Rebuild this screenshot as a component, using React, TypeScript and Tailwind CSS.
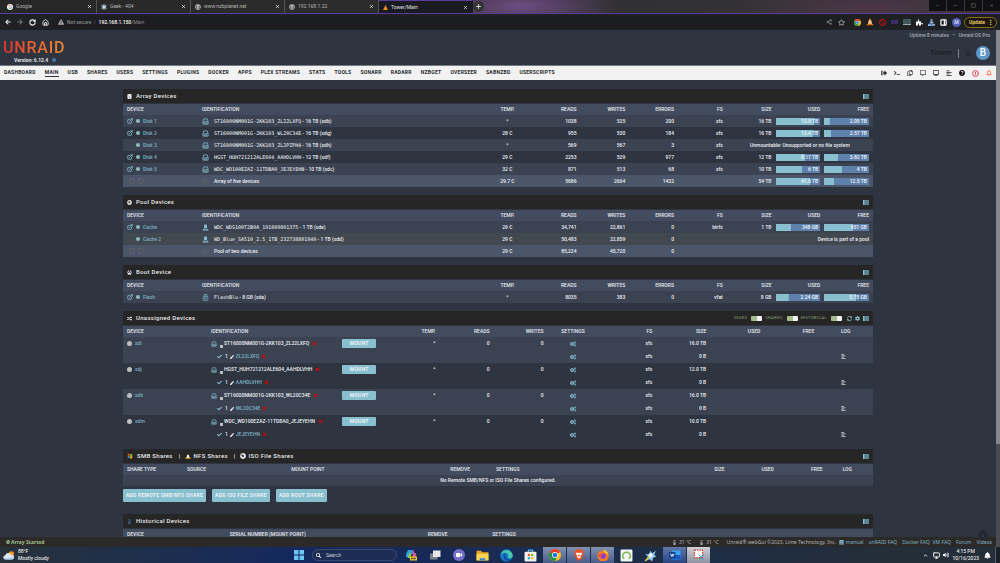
import type { ReactNode } from 'react';
import {
  FaArrowLeft, FaArrowRight, FaRegStar, FaBan, FaPuzzlePiece, FaDownload, FaExclamationTriangle, FaGlobe,
  FaCogs, FaCog, FaCheck, FaPen, FaTimes, FaBook, FaQuestionCircle, FaRegBell, FaBell, FaInfoCircle,
  FaDatabase, FaPaw, FaRandom, FaCompactDisc, FaSearch, FaSyncAlt, FaVolumeUp, FaThermometerHalf,
  FaVideo, FaSignOutAlt, FaTerminal, FaRegCopy, FaRegCommentAlt, FaDesktop, FaAlignLeft, FaStarOfLife,
} from 'react-icons/fa';
import {
  ExternalLink, RotateCw, House, Share2, ChevronDown, ChevronUp, ChevronLeft, Minus, Square, X, Plus,
  EllipsisVertical, Monitor, Menu, HardDrive, PanelRight, CircleAlert,
} from 'lucide-react';

const SANS = "font-['Roboto','Noto_Sans',sans-serif]";
const MONO = "font-['DejaVu_Sans_Mono',monospace]";

/* ---------- small drawings ---------- */

function ChromeLogo({ className }: { className?: string }) {
  return (
    <svg viewBox="0 0 24 24" className={className}>
      <circle cx="12" cy="12" r="12" fill="#fbc116" />
      <path d="M12 12 L1.6 6 A12 12 0 0 1 22.4 6 Z" fill="#e33b2e" />
      <path d="M12 12 L1.6 6 A12 12 0 0 0 12 24 L17 15 Z" fill="#229342" />
      <circle cx="12" cy="12" r="5.8" fill="#fff" />
      <circle cx="12" cy="12" r="4.5" fill="#1a73e8" />
    </svg>
  );
}

function GoogleLogo({ className }: { className?: string }) {
  return (
    <svg viewBox="0 0 24 24" className={className}>
      <circle cx="12" cy="12" r="12" fill="#fff" />
      <g fill="none" strokeWidth="3.4">
        <path d="M17 7.5 A7 7 0 0 0 5.6 9.2" stroke="#ea4335" />
        <path d="M5.6 9.2 A7 7 0 0 0 5.9 15.4" stroke="#fbbc05" />
        <path d="M5.9 15.4 A7 7 0 0 0 16.6 17.2" stroke="#34a853" />
        <path d="M16.6 17.2 A7 7 0 0 0 19 12 H12" stroke="#4285f4" />
      </g>
    </svg>
  );
}

function Cone({ className }: { className?: string }) {
  return (
    <svg viewBox="0 0 24 24" className={className}>
      <path d="M10 2h4l5 17H5z" fill="#f57900" />
      <path d="M8.7 7.5h6.6l1 3.5H7.7zM7 13.5h10l1 3H6z" fill="#f4f4f4" />
      <path d="M3 18h18l1.5 4h-21z" fill="#e06a00" />
    </svg>
  );
}

function DriveIcon({ className }: { className?: string }) {
  return (
    <svg viewBox="0 0 24 24" className={className} fill="none" stroke="#88c0d0" strokeWidth="2.6">
      <path d="M3 13 L6 3 H18 L21 13 V21 H3 Z" />
      <path d="M3 13 H21" />
      <path d="M6 17.5 H18" strokeWidth="3" />
    </svg>
  );
}

function SsdIcon({ className }: { className?: string }) {
  return (
    <svg viewBox="0 0 24 24" className={className} fill="#88c0d0">
      <path d="M7 2h10v12H7z" />
      <path d="M4 16h16l1 2H3zM2 19h20v3H2z" />
    </svg>
  );
}

function FlashIcon({ className }: { className?: string }) {
  return (
    <svg viewBox="0 0 24 24" className={className} fill="none" stroke="#88c0d0" strokeWidth="2.4">
      <path d="M7 8 V2 H17 V8" />
      <rect x="4" y="8" width="16" height="14" rx="4" />
      <path d="M8 13h8M8 17h8" />
    </svg>
  );
}

function ListIcon({ className }: { className?: string }) {
  return (
    <svg viewBox="0 0 24 20" className={className}>
      <rect width="24" height="20" fill="#5f8c97" />
      <path d="M0 0h5v20H0z" fill="#88c0d0" />
      <path d="M7 5h17M7 10h17M7 15h17" stroke="#50727b" strokeWidth="1.5" />
    </svg>
  );
}

function Penguin({ className }: { className?: string }) {
  return (
    <svg viewBox="0 0 24 24" className={className}>
      <path d="M12 1c4 0 4.500 3 4.500 6s4 7 4 11-4 5-8.500 5-8.500-1-8.500-5 4-8 4-11 .5-6 4.500-6z" fill="#1b1b1b" />
      <ellipse cx="12" cy="14" rx="5" ry="8" fill="#f5f5f5" />
      <path d="M9 6.500h6l-3 3zM1 19l7-3 3 7H2zM23 19l-7-3-3 7h9z" fill="#f5b51c" />
    </svg>
  );
}

function WindowsFlag({ className }: { className?: string }) {
  return (
    <svg viewBox="0 0 24 24" className={className}>
      <path d="M3 4q4-3 8-1v8q-4-2-8 1z" fill="#f25022" />
      <path d="M12 4q5 2 9-1v8q-4 3-9 1z" fill="#7fba00" />
      <path d="M3 13q4-3 8-1v8q-4-2-8 1z" fill="#3a8fd9" />
      <path d="M12 13q5 2 9-1v8q-4 3-9 1z" fill="#ffb900" />
    </svg>
  );
}

function WeatherIcon({ className }: { className?: string }) {
  return (
    <svg viewBox="0 0 36 30" className={className}>
      <circle cx="25" cy="10" r="8" fill="#f59a23" />
      <path d="M8 27a6.500 6.500 0 0 1-1-13 9 9 0 0 1 17-1 7 7 0 0 1 4 14z" fill="#dbe7f7" />
      <path d="M8 27a6.500 6.500 0 0 1-6-4q14 3 31-3a7 7 0 0 1-5 7z" fill="#9cbdea" />
    </svg>
  );
}

/* ---------- browser chrome ---------- */

const browserTabs = [
  { title: 'Google', icon: <GoogleLogo className="size-[6px]" /> },
  { title: 'Geek - 404', icon: <FaStarOfLife className="size-[6px] rounded-full text-[#b9dbe4]" /> },
  { title: 'www.nzbplanet.net', icon: <FaGlobe className="size-[6px] text-[#c8c8c8]" /> },
  { title: '192.168.1.22', icon: <FaGlobe className="size-[6px] text-[#c8c8c8]" /> },
  { title: 'Tower/Main', icon: <svg viewBox="0 0 10 10" className="size-[5px]"><path d="M5 0L10 10H0z" fill="#f08a1c" /></svg>, active: true },
];

function TabStrip() {
  return (
    <div className="flex h-[14px] items-stretch justify-between border-b border-[#5b3b9c] bg-[#2b2a2c] bg-[radial-gradient(ellipse_100px_24px_at_520px_6px,#6f4c84,transparent),radial-gradient(ellipse_140px_20px_at_870px_8px,#4c3648,transparent),linear-gradient(90deg,#262626,#2c2c2c_35%,#37353a)]">
      <div className="flex items-stretch pl-[3px]">
        {browserTabs.map((tab) => (
          <div
            key={tab.title}
            className={`flex w-[94px] items-center gap-[3px] border-r pl-1 pr-[4px] ${
              tab.active ? 'border-t border-t-[#5b3b9c] border-r-transparent bg-[#1a1a22] text-[#e4e4e4]' : 'border-r-[#555] text-[#b5b5b5]'
            }`}
          >
            {tab.icon}
            <span className="flex-1 text-[5px] leading-none">{tab.title}</span>
            <button aria-label={`Close ${tab.title}`}><X className="size-[5px] text-white" strokeWidth={3} /></button>
          </div>
        ))}
        <button aria-label="New tab" className="flex size-[11px] items-center justify-center self-center rounded-full bg-[#333336] text-white">
          <Plus className="size-[7px]" strokeWidth={2.5} />
        </button>
      </div>
      <div className="flex h-[11px] gap-px text-[#8a8a8a]">
        {[ChevronDown, Minus, Square, X].map((Icon, i) => (
          <button key={i} aria-label={['Search tabs', 'Minimize', 'Restore', 'Close'][i]} className="flex w-[17px] items-center justify-center bg-[#101012]">
            <Icon className="size-[5px]" strokeWidth={2} />
          </button>
        ))}
      </div>
    </div>
  );
}

function AddressBar() {
  return (
    <div className="flex h-4 items-center bg-[#1f2023] text-[5px] leading-none">
      <div className="flex items-center gap-[6px] pl-[5px] pr-[6px] text-[#ececec]">
        <button aria-label="Back"><FaArrowLeft className="size-[6px]" /></button>
        <button aria-label="Forward"><FaArrowRight className="size-[6px] text-[#777]" /></button>
        <button aria-label="Reload"><RotateCw className="size-[7px]" strokeWidth={3.5} /></button>
        <button aria-label="Home"><House className="size-[7px]" strokeWidth={3} /></button>
      </div>
      <div className="flex h-3 flex-1 items-center rounded-full bg-[#1c1d20] pl-[3px] pr-[3px] text-[#8c8c8c]">
        <FaExclamationTriangle className="mr-[3px] size-[6px] text-[#a8a8a8]" />
        <span className="font-medium">Not secure</span>
        <span className="mx-[3px] text-[#666]">|</span>
        <span className="flex-1"><span className="font-medium text-white">192.168.1.150</span>/Main</span>
        <Share2 className="mr-[6px] size-[6px] text-[#a9a9a9]" />
        <FaRegStar className="size-[7px] text-[#bbb]" />
      </div>
      <div className="flex items-center gap-[5px] pl-[6px] pr-[3px]">
        <ChromeLogo className="size-[7px]" />
        <Cone className="size-[8px]" />
        <FaBan className="size-[7px] text-[#d40f0f]" />
        <span className="h-[4px] w-[7px] bg-[#3d2f66]" />
        <span className="h-[6px] w-[8px] border-b border-[#9aa] bg-[#42545c]" />
        <FaPuzzlePiece className="size-[7px] text-white" />
        <FaDownload className="size-[7px] text-[#7fa9d8]" />
        <PanelRight className="size-[7px] text-white" strokeWidth={4} />
        <span className="flex size-[9px] items-center justify-center rounded-full bg-[#5560b8] text-white">M</span>
        <button className="-ml-[2px] flex h-[11px] items-center gap-[2px] rounded-full border border-[#8d6d1c] bg-[#1a1710] pl-[4px] pr-[2px] font-bold text-[#edc565]">
          Update
          <EllipsisVertical className="size-[7px]" strokeWidth={3} />
        </button>
      </div>
    </div>
  );
}

/* ---------- page header ---------- */

const menu = [
  'Dashboard', 'Main', 'USB', 'Shares', 'Users', 'Settings', 'Plugins', 'Docker', 'Apps', 'Plex Streams',
  'Stats', 'Tools', 'Sonarr', 'Radarr', 'NZBGet', 'Overseer', 'SABnzbd', 'Userscripts',
];

function PageHeader() {
  return (
    <header className="flex h-9 items-start justify-between border-b border-[#757a82] pl-[3px] pr-[6px]">
      <div className="pt-[10px]">
        <a href="#home" className="block w-fit bg-linear-to-r from-[#e0322c] to-[#f08a30] bg-clip-text text-[16px] font-medium leading-[16px] tracking-wider text-transparent">
          UNRAID
        </a>
        <p className="flex items-center gap-1 pl-[11px] text-[5px] font-bold leading-[8px] text-[#e3e5e8]">
          Version: 6.12.4 <FaInfoCircle className="size-[4px] text-[#4d80b4]" />
        </p>
      </div>
      <div className="flex flex-col items-end pt-[2px]">
        <p className="flex gap-1 text-[5px] font-medium leading-[7px] text-[#a6abb4]">
          <span>Uptime 8 minutes</span>
          <span>•</span>
          <span>Unraid OS Pro</span>
        </p>
        <div className="flex items-center gap-[6px] pt-[7px]">
          <span className="text-[8px] leading-none text-[#1c1b1b]">Tower</span>
          <span className="h-[9px] w-px bg-[#7d838e]" />
          <button aria-label="Menu" className="-mr-[2px]"><Menu className="size-[7px] text-[#1c1b1b]" /></button>
          <span className="flex size-[14px] items-center justify-center rounded-full bg-[#5f97c6] text-[10px] font-medium leading-none text-white">B</span>
        </div>
      </div>
    </header>
  );
}

function NavBar() {
  return (
    <nav className="flex h-[14px] items-center justify-between bg-[#f2f2f2] pl-1 pr-[4px] text-[#26272b]">
      <div className="flex items-center gap-[9px] text-[5px] font-bold uppercase leading-[7px] tracking-wider">
        {menu.map((item) => (
          <a key={item} href={`#${item}`} className={`whitespace-nowrap border-b ${item === 'Main' ? 'border-[#33343a]' : 'border-transparent'}`}>
            {item}
          </a>
        ))}
      </div>
      <div className="flex items-center gap-[7px]">
        <FaSignOutAlt className="size-[6px]" />
        <FaTerminal className="size-[6px]" />
        <FaRegCopy className="size-[6px]" />
        <FaRegCommentAlt className="size-[6px]" />
        <FaDesktop className="size-[6px]" />
        <FaAlignLeft className="size-[6px]" />
        <FaQuestionCircle className="size-[6px] text-black" />
        <CircleAlert className="size-[7px] text-[#e22b46]" strokeWidth={3} />
        <FaRegBell className="size-[6px] text-[#ff5a36]" />
      </div>
    </nav>
  );
}

/* ---------- tables ---------- */

function SectionTitle({ children, extra }: { children: ReactNode; extra?: ReactNode }) {
  return (
    <div className="mb-px flex h-[14px] items-center justify-between bg-[#262626] pl-1 pr-1">
      <h2 className="flex items-center gap-1 text-[6px] font-medium leading-none tracking-wider text-[#e9e9e9]">{children}</h2>
      <div className="flex items-center gap-[3px]">
        {extra}
        <ListIcon className="h-[5px] w-[6px]" />
      </div>
    </div>
  );
}

type HeadCell = [label: string, width: string, align: string];

function TableHead({ cells }: { cells: HeadCell[] }) {
  return (
    <thead>
      <tr className="h-[11px] bg-[#434c5e] text-[5px] uppercase text-[#e5e9f0]">
        {cells.map(([label, width, align], i) => (
          <th key={i} className={`${width} ${align} whitespace-nowrap px-1 py-0 font-medium`}>{label}</th>
        ))}
      </tr>
    </thead>
  );
}

const deviceHead: HeadCell[] = [
  ['Device', 'w-[10%]', 'text-left'],
  ['Identification', 'w-[38%]', 'text-left'],
  ['Temp.', 'w-[6.5%]', 'text-center'],
  ['Reads', 'w-[6.5%]', 'text-right'],
  ['Writes', 'w-[6.5%]', 'text-right'],
  ['Errors', 'w-[6.5%]', 'text-right'],
  ['FS', 'w-[6.5%]', 'text-right'],
  ['Size', 'w-[6.5%]', 'text-right'],
  ['Used', 'w-[6.5%]', 'text-right'],
  ['Free', 'w-[6.5%]', 'text-right'],
];

interface Device {
  name: string;
  serial: string;
  info: string;
  kind?: 'hdd' | 'ssd' | 'flash';
  temp: string;
  reads: string;
  writes: string;
  errors: string;
  fs?: string;
  size?: string;
  used?: [string, number];
  free?: [string, number];
  note?: string;
  noteCenter?: boolean;
  bg: string;
  browse?: boolean;
}

const ODD = 'bg-[#3b4252]';
const EVEN = 'bg-[#2e3440]';

const arrayDevices: Device[] = [
  { name: 'Disk 1', serial: 'ST16000NM001G-2KK103_ZL22LXFQ', info: '16 TB (sdb)', temp: '*', reads: '1038', writes: '525', errors: '200', fs: 'xfs', size: '16 TB', used: ['13.9 TB', 87], free: ['2.05 TB', 13], bg: ODD, browse: true },
  { name: 'Disk 2', serial: 'ST16000NM001G-2KK103_WL20C34E', info: '16 TB (sdg)', temp: '28 C', reads: '955', writes: '530', errors: '184', fs: 'xfs', size: '16 TB', used: ['13.4 TB', 84], free: ['2.57 TB', 16], bg: EVEN, browse: true },
  { name: 'Disk 3', serial: 'ST16000NM001G-2KK103_ZL2PZPH4', info: '16 TB (sdh)', temp: '*', reads: '569', writes: '567', errors: '3', fs: 'xfs', note: 'Unmountable: Unsupported or no file system', noteCenter: true, bg: ODD },
  { name: 'Disk 4', serial: 'HGST_HUH721212ALE604_AAHDLVHH', info: '12 TB (sdf)', temp: '29 C', reads: '2253', writes: '529', errors: '977', fs: 'xfs', size: '12 TB', used: ['8.17 TB', 67], free: ['3.82 TB', 32], bg: EVEN, browse: true },
  { name: 'Disk 5', serial: 'WDC_WD100EZAZ-11TDBA0_JEJEYEHN', info: '10 TB (sdc)', temp: '32 C', reads: '871', writes: '513', errors: '68', fs: 'xfs', size: '10 TB', used: ['6 TB', 60], free: ['4 TB', 40], bg: ODD, browse: true },
];

const poolDevices: Device[] = [
  { name: 'Cache', serial: 'WDC_WDS100T2B0A_191809801375', info: '1 TB (sde)', kind: 'ssd', temp: '29 C', reads: '34,741', writes: '22,861', errors: '0', fs: 'btrfs', size: '1 TB', used: ['348 GB', 35], free: ['651 GB', 65], bg: ODD, browse: true },
  { name: 'Cache 2', serial: 'WD_Blue_SA510_2.5_1TB_232738801940', info: '1 TB (sdd)', kind: 'ssd', temp: '29 C', reads: '50,483', writes: '22,859', errors: '0', note: 'Device is part of a pool', bg: 'bg-[#414850]' },
];

const bootDevices: Device[] = [
  { name: 'Flash', serial: 'FlashBlu', info: '8 GB (sda)', kind: 'flash', temp: '*', reads: '8035', writes: '383', errors: '0', fs: 'vfat', size: '8 GB', used: ['2.24 GB', 29], free: ['5.75 GB', 72], bg: ODD, browse: true },
];

function UsageBar({ value }: { value: [string, number] }) {
  return (
    <div
      className="h-[7px] bg-[#5e81ac] bg-[linear-gradient(#88c0d0,#88c0d0)] bg-no-repeat pr-[2px] leading-[7px] text-[#f4f6f9]"
      style={{ backgroundSize: `${value[1]}% 100%` }}
    >
      {value[0]}
    </div>
  );
}

function DeviceRow({ device }: { device: Device }) {
  const Icon = device.kind === 'ssd' ? SsdIcon : device.kind === 'flash' ? FlashIcon : DriveIcon;
  return (
    <tr className={`h-3 ${device.bg}`}>
      <td className="px-1 py-0">
        <div className="flex items-center gap-[3px]">
          {device.browse ? (
            <a href="#browse" aria-label="Browse"><ExternalLink className="size-[6px] text-[#88c0d0]" strokeWidth={3} /></a>
          ) : (
            <span className="size-[6px]" />
          )}
          <span className="size-[4px] rounded-full bg-[#8fbcbb]" />
          <a href="#device" className="text-[#7fb2c2]">{device.name}</a>
        </div>
      </td>
      <td className="px-1 py-0">
        <div className="flex items-center gap-[5px] whitespace-nowrap">
          <Icon className="size-[7px]" />
          <span><span className={`${MONO} text-[#f4f6f9]`}>{device.serial}</span> - {device.info}</span>
        </div>
      </td>
      <td className="px-1 py-0 text-center">{device.temp}</td>
      <td className="px-1 py-0">{device.reads}</td>
      <td className="px-1 py-0">{device.writes}</td>
      <td className="px-1 py-0">{device.errors}</td>
      <td className="px-1 py-0">{device.fs}</td>
      {device.note ? (
        <td colSpan={3} className={`whitespace-nowrap px-1 py-0 ${device.noteCenter ? 'text-center' : ''}`}>{device.note}</td>
      ) : (
        <>
          <td className="px-1 py-0">{device.size}</td>
          <td className="py-0 pl-0 pr-1">{device.used && <UsageBar value={device.used} />}</td>
          <td className="py-0 pl-0 pr-1">{device.free && <UsageBar value={device.free} />}</td>
        </>
      )}
    </tr>
  );
}

interface Totals {
  label: string;
  values: string[];
  size?: string;
  used?: [string, number];
  free?: [string, number];
}

function DeviceTable({ devices, totals }: { devices: Device[]; totals?: Totals }) {
  return (
    <table className="mb-2 w-full table-fixed text-right text-[5px] font-medium leading-none text-[#eceff4]">
      <TableHead cells={deviceHead} />
      <tbody>
        {devices.map((device) => <DeviceRow key={device.name} device={device} />)}
        {totals && (
          <tr className="h-3 bg-[#4c566a]">
            <td className="px-1 py-0">
              <div className="flex gap-[3px] pl-[2px] text-[#65656a]">
                <Square className="size-[6px]" strokeWidth={3} />
                <Square className="size-[6px]" strokeWidth={3} />
              </div>
            </td>
            <td className="px-1 py-0">
              <div className="flex items-center gap-[5px]">
                <HardDrive className="size-[7px] text-[#65656a]" />
                {totals.label}
              </div>
            </td>
            <td className="px-1 py-0 text-center">{totals.values[0]}</td>
            <td className="px-1 py-0">{totals.values[1]}</td>
            <td className="px-1 py-0">{totals.values[2]}</td>
            <td className="px-1 py-0">{totals.values[3]}</td>
            <td />
            <td className="px-1 py-0">{totals.size}</td>
            <td className="py-0 pl-0 pr-1">{totals.used && <UsageBar value={totals.used} />}</td>
            <td className="py-0 pl-0 pr-1">{totals.free && <UsageBar value={totals.free} />}</td>
          </tr>
        )}
      </tbody>
    </table>
  );
}

const unassignedHead: HeadCell[] = [
  ['Device', 'w-[11.2%]', 'text-left'],
  ['Identification', 'w-[17.5%]', 'text-left'],
  ['', 'w-[6.3%]', 'text-left'],
  ['Temp.', 'w-[7.2%]', 'text-right'],
  ['Reads', 'w-[7.2%]', 'text-right'],
  ['Writes', 'w-[7.2%]', 'text-right'],
  ['Settings', 'w-[6.8%]', 'text-center'],
  ['FS', 'w-[7.7%]', 'text-right'],
  ['Size', 'w-[7.2%]', 'text-right'],
  ['Used', 'w-[7.2%]', 'text-right'],
  ['Free', 'w-[7.2%]', 'text-right'],
  ['Log', 'w-[7.3%]', 'text-center'],
];

const unassigned = [
  { dev: 'sdi', serial: 'ST16000NM001G-2KK103_ZL22LXFQ', label: 'ZL22LXFQ', size: '16.0 TB' },
  { dev: 'sdj', serial: 'HGST_HUH721212ALE604_AAHDLVHH', label: 'AAHDLVHH', size: '12.0 TB' },
  { dev: 'sdk', serial: 'ST16000NM001G-2KK103_WL20C34E', label: 'WL20C34E', size: '16.0 TB' },
  { dev: 'sdm', serial: 'WDC_WD100EZAZ-11TDBA0_JEJEYEHN', label: 'JEJEYEHN', size: '10.0 TB' },
];

function UnassignedTable() {
  return (
    <table className="mb-2 w-full table-fixed text-right text-[5px] font-medium leading-none text-[#eceff4]">
      <TableHead cells={unassignedHead} />
      {unassigned.map((d, i) => (
        <tbody key={d.dev} className={i % 2 === 0 ? ODD : EVEN}>
          <tr className="h-[13px]">
            <td className="px-1 py-0">
              <div className="flex items-center gap-[3px]">
                <span className="size-[5px] rounded-full bg-[#bdbdbd]" />
                <a href="#dev" className="text-[#7fb2c2]">{d.dev}</a>
              </div>
            </td>
            <td className="px-1 py-0">
              <div className="flex items-center gap-[3px] whitespace-nowrap">
                <DriveIcon className="size-[6px] shrink-0" />
                <span className="flex items-center">
                  <span className="-mb-[2px] mr-px size-[3px] self-end bg-[#bdbdbd]" />
                  {d.serial}
                </span>
                <FaTimes className="size-[5px] shrink-0 text-[#e00000]" />
              </div>
            </td>
            <td className="px-1 py-0 text-left">
              <button className="block h-[9px] w-[34px] rounded-[1px] bg-[#88c0d0] text-[5px] font-bold leading-[9px] tracking-wider text-[#eceff4]">MOUNT</button>
            </td>
            <td className="px-1 py-0">*</td>
            <td className="px-1 py-0">0</td>
            <td className="px-1 py-0">0</td>
            <td className="px-1 py-0"><FaCogs className="mx-auto size-[6px] text-[#88c0d0]" /></td>
            <td className="px-1 py-0">xfs</td>
            <td className="px-1 py-0">{d.size}</td>
            <td />
            <td />
            <td />
          </tr>
          <tr className="h-[13px]">
            <td />
            <td className="px-1 py-0">
              <div className="flex items-center gap-[2px] pl-[6px]">
                <FaCheck className="mr-px size-[5px] text-[#88c0d0]" />
                1
                <FaPen className="size-[4px]" />
                <a href="#partition" className="text-[#7fb2c2]">{d.label}</a>
                <FaTimes className="size-[5px] text-[#e00000]" />
              </div>
            </td>
            <td />
            <td />
            <td />
            <td />
            <td className="px-1 py-0"><FaCogs className="mx-auto size-[6px] text-[#88c0d0]" /></td>
            <td className="px-1 py-0">xfs</td>
            <td className="px-1 py-0">0 B</td>
            <td />
            <td />
            <td className="py-0 pl-0 pr-1"><FaAlignLeft className="mx-auto size-[5px] text-[#d0d3d8]" /></td>
          </tr>
        </tbody>
      ))}
    </table>
  );
}

const sharesHead: HeadCell[] = [
  ['Share Type', 'w-[8%]', 'text-left'],
  ['Source', 'w-[13.9%]', 'text-left'],
  ['Mount Point', 'w-[21.2%]', 'text-left'],
  ['Remove', 'w-[6.1%]', 'text-left'],
  ['Settings', 'w-[29.1%]', 'text-left'],
  ['Size', 'w-[6.3%]', 'text-left'],
  ['Used', 'w-[6.6%]', 'text-left'],
  ['Free', 'w-[4.2%]', 'text-left'],
  ['Log', 'w-[4.6%]', 'text-left'],
];

const historicalHead: HeadCell[] = [
  ['Device', 'w-[13.7%]', 'text-left'],
  ['Serial Number (Mount Point)', 'w-[26.4%]', 'text-left'],
  ['Remove', 'w-[8.6%]', 'text-left'],
  ['Settings', 'w-[51.3%]', 'text-left'],
];

function Toggle({ label }: { label: string }) {
  return (
    <label className="flex items-center gap-1 text-[4px] uppercase leading-none tracking-widest text-[#8fa676]">
      {label}
      <input
        type="checkbox"
        defaultChecked
        className="h-[5px] w-[11px] appearance-none rounded-[1px] bg-linear-to-r from-[#a3be8c] from-55% to-[#f2f2f2] to-55%"
      />
    </label>
  );
}

function MainPage() {
  return (
    <main className="min-h-0 flex-1 overflow-hidden px-[123px] pt-[9px]">
      <SectionTitle><FaDatabase className="size-[5px]" />Array Devices</SectionTitle>
      <DeviceTable
        devices={arrayDevices}
        totals={{ label: 'Array of five devices', values: ['29.7 C', '5686', '2664', '1432'], size: '54 TB', used: ['41.5 TB', 77], free: ['12.5 TB', 23] }}
      />

      <SectionTitle><FaCompactDisc className="size-[5px]" />Pool Devices</SectionTitle>
      <DeviceTable
        devices={poolDevices}
        totals={{ label: 'Pool of two devices', values: ['29 C', '85,224', '45,720', '0'] }}
      />

      <SectionTitle><FaPaw className="size-[5px]" />Boot Device</SectionTitle>
      <DeviceTable devices={bootDevices} />

      <SectionTitle
        extra={
          <>
            <Toggle label="Disks" />
            <Toggle label="Shares" />
            <Toggle label="Historical" />
            <button aria-label="Refresh" className="ml-[2px]"><FaSyncAlt className="size-[5px] text-[#88c0d0]" /></button>
            <button aria-label="Settings"><FaCog className="size-[5px] text-[#88c0d0]" /></button>
          </>
        }
      >
        <FaRandom className="size-[5px]" />Unassigned Devices
      </SectionTitle>
      <UnassignedTable />

      <SectionTitle>
        <WindowsFlag className="size-[6px]" />SMB Shares
        <span className="pl-[2px]">|</span>
        <Penguin className="-mr-px size-[6px]" />NFS Shares
        <span className="pl-[2px]">|</span>
        <FaCompactDisc className="-mr-px size-[6px]" />ISO File Shares
      </SectionTitle>
      <table className="w-full table-fixed text-[5px] font-medium leading-none text-[#eceff4]">
        <TableHead cells={sharesHead} />
        <tbody>
          <tr className={`h-[11px] ${ODD}`}>
            <td colSpan={9} className="p-0 text-center">No Remote SMB/NFS or ISO File Shares configured.</td>
          </tr>
        </tbody>
      </table>
      <div className="mb-3 mt-[3px] flex gap-[6px] text-[5px] font-bold uppercase leading-none tracking-wider text-[#eceff4]">
        {['Add Remote SMB/NFS Share', 'Add ISO File Share', 'Add Root Share'].map((label) => (
          <button key={label} className="h-[13px] rounded-[1px] bg-[#88c0d0] px-[3px] uppercase">{label}</button>
        ))}
      </div>

      <SectionTitle><FaThermometerHalf className="size-[5px] text-[#3f6f9e]" />Historical Devices</SectionTitle>
      <table className="w-full table-fixed leading-none">
        <TableHead cells={historicalHead} />
      </table>
    </main>
  );
}

function PageFooter() {
  return (
    <footer className="flex h-[10px] items-center justify-between bg-[#2b2a29] pl-[6px] pr-1 font-['Noto_Sans',sans-serif] text-[5px] leading-none text-[#b4b4b4]">
      <p className="flex items-center gap-px font-bold text-[#a3be8c]">
        <FaCompactDisc className="size-[4px]" />Array Started
      </p>
      <div className="flex items-center gap-[5px]">
        <span className="flex items-center gap-[2px]"><FaThermometerHalf className="size-[5px]" />31 °C</span>
        <span className="ml-[3px] flex items-center gap-[2px]"><FaThermometerHalf className="size-[5px]" />31 °C</span>
        <span className="ml-[3px]">Unraid® webGui ©2023, Lime Technology, Inc.</span>
        <a href="#manual" className="-ml-[2px] flex items-center gap-[2px] text-[#7fb2c2]"><FaBook className="size-[5px]" />manual</a>
        <a href="#faq" className="text-[#7fb2c2]">unRAID FAQ</a>
        <a href="#docker" className="text-[#7fb2c2]">Docker FAQ</a>
        <a href="#vm" className="-ml-[2px] text-[#7fb2c2]">VM FAQ</a>
        <a href="#forum" className="text-[#7fb2c2]">Forum</a>
        <a href="#videos" className="text-[#7fb2c2]">Videos</a>
      </div>
    </footer>
  );
}

/* ---------- desktop taskbar ---------- */

const apps: { name: string; bg?: string; icon: ReactNode }[] = [
  {
    name: 'Copilot',
    icon: (
      <svg viewBox="0 0 24 24" className="size-3">
        <path d="M6 2h8l3 8H8l-3 7C1 17 1 12 3 8z" fill="#2a9fe0" />
        <path d="M14 2c4 0 4 3 5 6h2c3 2 1 8-1 11h-7l3-9z" fill="#d855a2" />
        <path d="M5 17l3-9 5 1-3 10z" fill="#8ccf4c" />
        <path d="M10 15h14v8H10z" fill="#f4c530" />
        <path d="M12 19h10" stroke="#333" strokeWidth="3" strokeDasharray="2 1" />
      </svg>
    ),
  },
  { name: 'Task view', icon: <svg viewBox="0 0 24 24" className="size-3"><path d="M2 9h15v12H2z" fill="#7d828c" /><path d="M8 3h15v13H8z" fill="#e6e6e6" /></svg> },
  { name: 'Chat', icon: <span className="flex size-3 items-center justify-center rounded-full bg-[#7670c8]"><FaVideo className="size-[6px] text-white" /></span> },
  { name: 'File Explorer', icon: <svg viewBox="0 0 24 24" className="size-[13px]"><path d="M1 3h8l3 3h11v15H1z" fill="#e9a820" /><path d="M1 9h22v12H1z" fill="#fcd453" /><path d="M7 17h10v4H7z" fill="#3b87d6" /></svg> },
  {
    name: 'Edge',
    icon: (
      <svg viewBox="0 0 24 24" className="size-[13px]">
        <circle cx="12" cy="12" r="11.500" fill="#1779c9" />
        <path d="M1 11a11.500 11.500 0 0 1 22.500 1c0 6-9 6-9 3 1-1 1-2 1-3 0-3-3-5-6-5-4 0-7 1-8.500 4z" fill="#48cba5" />
        <path d="M10 8c-5 2-5 11 3 14 4 1 7-1 9-4-5 3-13 1-12-10z" fill="#0f4c9c" />
      </svg>
    ),
  },
  { name: 'Store', icon: <svg viewBox="0 0 24 24" className="size-[13px]"><path d="M8 6V2h8v4" fill="none" stroke="#5bb8ea" strokeWidth="2" /><rect x="1" y="5" width="22" height="18" rx="2" fill="#f1f1f1" /><path d="M7 9h4v4H7z" fill="#f25022" /><path d="M13 9h4v4h-4z" fill="#7fba00" /><path d="M7 15h4v4H7z" fill="#00a4ef" /><path d="M13 15h4v4h-4z" fill="#ffb900" /></svg> },
  { name: 'Chrome', bg: 'bg-linear-to-b from-[#8390b0] to-[#4a5c88]', icon: <ChromeLogo className="size-3" /> },
  { name: 'Brave', bg: 'bg-linear-to-b from-[#8390b0] to-[#4a5c88]', icon: <svg viewBox="0 0 24 24" className="size-3"><path d="M7 1h10l4 4-1 3 1 3-4 9-5 4-5-4-4-9 1-3-1-3z" fill="#f4501e" /><path d="M7 7l5 1 5-1 1 3-3 4 1 2-4 3-4-3 1-2-3-4z" fill="#fff" /><path d="M10 11l2 1 2-1-1 4h-2z" fill="#f4501e" /></svg> },
  { name: 'Firefox', bg: 'bg-linear-to-b from-[#8390b0] to-[#4a5c88]', icon: <svg viewBox="0 0 24 24" className="size-3"><path d="M4 4l3 2 5-4c7 1 12 6 11 12a11 11 0 0 1-22 0c0-4 1-7 3-10z" fill="#ff7a1a" /><path d="M14 1c5 3 9 7 9 12-2-4-5-4-8-7-1-2-1-4-1-5z" fill="#ffd43a" /><circle cx="12" cy="14" r="5.500" fill="#7a3fe0" /><path d="M2 11c4-3 7 1 11 0-1 3-5 2-6 5-4 0-5-2-5-5z" fill="#ff4a3d" /></svg> },
  { name: 'Sync', icon: <svg viewBox="0 0 24 24" className="size-[13px]"><rect x="1" y="1" width="22" height="22" rx="2" fill="#f4f7f2" /><path d="M8 18c-6-4-3-12 4-12s10 8 4 12" fill="none" stroke="#7db65a" strokeWidth="2.600" /></svg> },
  { name: 'Irfan', icon: <svg viewBox="0 0 24 24" className="size-[13px]"><path d="M3 22l4-8-5-5 7 1 3-7 3 5 7-5-3 8 4 3-6 2-2 7-5-4z" fill="#8cc6ea" /><circle cx="12" cy="12" r="4" fill="#e9f4fb" /><path d="M2 22l8-8" stroke="#e5c63b" strokeWidth="2.500" /></svg> },
  { name: 'Word', bg: 'bg-linear-to-b from-[#6176a8] to-[#2c4684]', icon: <svg viewBox="0 0 24 24" className="size-3"><path d="M6 3h17v18H6z" fill="#41a5ee" /><path d="M6 12h17v9H6z" fill="#185abd" /><path d="M0 6h13v12H0z" fill="#103f91" /><path d="M3 9l2 6 1.500-5L8 15l2-6" fill="none" stroke="#fff" strokeWidth="1.500" /></svg> },
  { name: 'Snipping Tool', bg: 'bg-linear-to-b from-[#d0d0d4] to-[#8d93a3]', icon: <svg viewBox="0 0 24 24" className="size-3"><rect x="3" y="2" width="16" height="15" fill="#fff" stroke="#d8402c" strokeWidth="2.500" strokeDasharray="3 2" /><path d="M12 11l8 10M21 11l-8 10" stroke="#2b8fc4" strokeWidth="2" /></svg> },
];

function Taskbar() {
  return (
    <div className="flex h-4 items-stretch bg-linear-to-r from-[#28323a] from-0% via-[#14285f] via-30% to-[#242e38] to-90% text-[5px] leading-none text-white">
      <div className="flex flex-1 items-center gap-[3px] pl-[3px]">
        <WeatherIcon className="h-[11px] w-3" />
        <div>
          <p className="leading-[7px]">88°F</p>
          <p className="leading-[7px]">Mostly cloudy</p>
        </div>
      </div>
      <div className="flex items-stretch pl-[2px]">
        <button aria-label="Start" className="mr-2 self-center">
          <svg viewBox="0 0 20 20" className="size-[10px]" fill="#6cc4f5">
            <path d="M0 0h9v9H0zM11 0h9v9h-9zM0 11h9v9H0zM11 11h9v9h-9z" />
          </svg>
        </button>
        <label className="flex h-3 w-[85px] items-center gap-[5px] self-center rounded-full border border-[#3b4a70] bg-[#1c2c52] pl-[3px]">
          <FaSearch className="size-[5px]" />
          <input aria-label="Search" placeholder="Search" className="w-12 bg-transparent text-[5px] leading-none placeholder:text-[#c9cedb]" />
        </label>
        <div className="flex items-stretch pl-[2px]">
          {apps.map((app) => (
            <button key={app.name} aria-label={app.name} className={`mr-px flex w-[23px] items-center justify-center ${app.bg ?? ''}`}>
              {app.icon}
            </button>
          ))}
        </div>
      </div>
      <div className="flex flex-1 items-center justify-end gap-[3px]">
        <ChevronUp className="mr-[2px] size-[5px]" strokeWidth={4} />
        <Monitor className="size-[7px]" strokeWidth={3} />
        <FaVolumeUp className="size-[6px]" />
        <div className="text-center leading-[7px]">
          <p>4:15 PM</p>
          <p>10/16/2023</p>
        </div>
        <FaBell className="ml-[2px] size-[7px]" />
        <span className="ml-px h-4 w-[5px] border-l border-[#555d66] bg-[#1a2027]" />
      </div>
    </div>
  );
}

export default function App() {
  return (
    <div className={`${SANS} flex h-screen flex-col overflow-hidden bg-[#2e3440]`}>
      <TabStrip />
      <AddressBar />
      <div className="flex min-h-0 flex-1">
        <div className="relative flex min-w-0 flex-1 flex-col">
          <PageHeader />
          <NavBar />
          <MainPage />
          <button aria-label="Back to top" className="absolute bottom-2 right-[9px] flex size-2 rotate-45 items-center justify-center bg-[#23272f]">
            <ChevronLeft className="size-[5px] -rotate-45 text-[#7b818c]" />
          </button>
          <PageFooter />
        </div>
        <div className="w-1 bg-[#4a4c50]">
          <div className="h-[80%] bg-[#85878b]" />
        </div>
      </div>
      <Taskbar />
    </div>
  );
}
